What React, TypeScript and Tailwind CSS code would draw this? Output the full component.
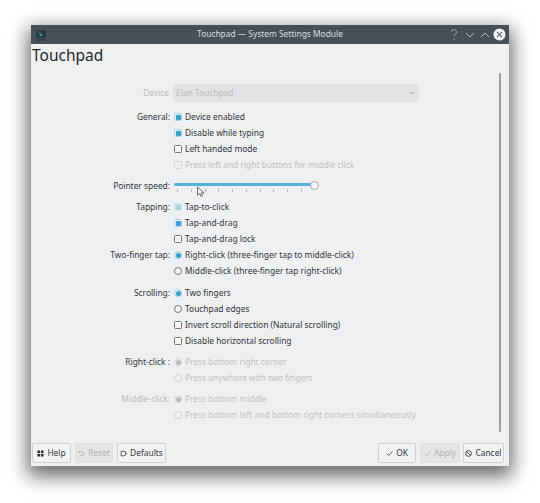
import React from 'react';

type Kind = 'check' | 'radio';

const Box = ({ kind, on, off, pale }: { kind: Kind; on?: boolean; off?: boolean; pale?: boolean }) => (
  <span
    className={`flex h-[8px] w-[8px] shrink-0 items-center justify-center border ${
      kind === 'radio' ? 'rounded-full' : 'rounded-[1.5px]'
    } ${pale ? 'border-[#d3e6ee] bg-[#d3e6ee]' : off ? 'border-[#d2d4d6] bg-[#f0f1f2]' : on ? 'border-[#9fd3e8] bg-[#e8f2f6]' : 'border-[#6f7579] bg-[#f4f5f6]'}`}
  >
    {on && (
      <span
        className={`h-[5px] w-[5px] ${kind === 'radio' ? 'rounded-full' : 'rounded-[1px]'} ${
          pale ? 'bg-[#a8d0df]' : off ? 'bg-[#b9bcbf]' : 'bg-[#3a9fc9]'
        }`}
      />
    )}
  </span>
);

const Row = ({
  label,
  labelOff,
  kind,
  on,
  off,
  pale,
  text,
}: {
  label?: string;
  labelOff?: boolean;
  kind: Kind;
  on?: boolean;
  off?: boolean;
  pale?: boolean;
  text: string;
}) => (
  <div className="flex h-4 items-center">
    <div className={`w-[143px] shrink-0 pr-[4px] text-right ${labelOff ? 'text-[#b9bcbe]' : 'text-[#31363b]'}`}>
      {label}
    </div>
    <Box kind={kind} on={on} off={off} pale={pale} />
    <span className={`ml-[3px] whitespace-nowrap ${off ? 'text-[#bfc1c3]' : 'text-[#31363b]'}`}>{text}</span>
  </div>
);

const Btn = ({
  icon,
  text,
  off,
  className = '',
}: {
  icon: React.ReactNode;
  text: string;
  off?: boolean;
  className?: string;
}) => (
  <div
    className={`flex h-[20px] items-center justify-center gap-[3px] rounded-[2px] border ${
      off ? 'border-[#dfe0e1] bg-[#e3e5e6] text-[#b0b3b5]' : 'border-[#cfd1d3] bg-[#f3f4f5] text-[#31363b]'
    } ${className}`}
  >
    {icon}
    <span>{text}</span>
  </div>
);

const ticks = [0, 1, 2, 3, 4, 5, 6, 7, 8, 9];

const App = () => {
  return (
    <div className="h-[503px] w-[540px] overflow-hidden bg-white pt-[25px] pl-[31px] font-['Noto_Sans',sans-serif] text-[8.4px]">
      <div className="flex h-[441px] w-[478px] flex-col bg-[#eff0f1] shadow-[0_7px_18px_3px_rgba(0,0,0,0.6)]">
        {/* title bar */}
        <div className="flex h-[19px] shrink-0 items-center bg-[#475057] pr-[3px] pl-[4px] text-[#d8dbdd]">
          <svg width="12" height="12" viewBox="0 0 12 12" fill="none">
            <rect x="1" y="1" width="10" height="8" fill="#2f3a40" />
            <path d="M4 2l4 5H5z" fill="#2a8fa8" />
            <path d="M1 11h10" stroke="#20282c" />
          </svg>
          <div className="flex-1 pl-[45px] text-center">Touchpad — System Settings Module</div>
          <svg width="12" height="12" viewBox="0 0 12 12" fill="none" stroke="#b8bcbf" strokeWidth="0.8">
            <path d="M3.5 3a2.5 2.5 0 1 1 3.5 2.4c-.7.4-1 .8-1 1.7M6 9.5v1.5" />
          </svg>
          <svg className="ml-[4px]" width="12" height="12" viewBox="0 0 12 12" fill="none" stroke="#c5c9cc" strokeWidth="0.9">
            <path d="M2 4l4 4 4-4" />
          </svg>
          <svg className="ml-[3px]" width="12" height="12" viewBox="0 0 12 12" fill="none" stroke="#c5c9cc" strokeWidth="0.9">
            <path d="M2 8l4-4 4 4" />
          </svg>
          <svg className="ml-[2px]" width="13" height="13" viewBox="0 0 13 13" fill="none">
            <circle cx="6.5" cy="6.5" r="6" fill="#f2f3f4" />
            <path d="M4 4l5 5M9 4l-5 5" stroke="#6a7176" strokeWidth="1.1" />
          </svg>
        </div>

        <div className="flex min-h-0 flex-1 flex-col">
          <div className="flex min-h-0 flex-1">
            <div className="min-w-0 flex-1">
              <div className="pl-[1px] text-[15.5px] leading-[23px] text-[#232629]">Touchpad</div>

              {/* device */}
              <div className="mt-[17px] flex h-[18px] items-center">
                <div className="w-[142px] shrink-0 pr-[4px] text-right text-[#b9bcbe]">Device</div>
                <div className="flex h-[18px] w-[246px] items-center justify-between rounded-[2px] bg-[#e1e3e4] pr-[4px] pl-[3px] text-[#b9bcbe]">
                  <span>Elan Touchpad</span>
                  <span className="mt-[1px] h-0 w-0 border-x-[3px] border-t-[3px] border-x-transparent border-t-[#c2c4c6]" />
                </div>
              </div>

              <div className="mt-[7px]">
                <Row label="General:" kind="check" on text="Device enabled" />
                <Row kind="check" on text="Disable while typing" />
                <Row kind="check" text="Left handed mode" />
                <Row kind="check" off text="Press left and right buttons for middle click" />
              </div>

              {/* pointer speed */}
              <div className="mt-[5px] flex h-[16px] items-center">
                <div className="w-[143px] shrink-0 pr-[4px] text-right text-[#31363b]">Pointer speed:</div>
                <div className="relative h-[16px] w-[146px]">
                  <div className="mt-[5px] h-[3px] w-[137px] rounded-full bg-[#4fb2d8]" />
                  <div className="mt-[3px] ml-[3px] flex w-[125px] justify-between">
                    {ticks.map((t) => (
                      <span key={t} className="h-[3px] w-px bg-[#b4b7ba]" />
                    ))}
                  </div>
                  <span className="absolute top-[3px] left-[136px] h-[9px] w-[9px] rounded-full border border-[#a5a8ab] bg-[#f4f5f6]" />
                  <svg className="absolute top-[8px] left-[22px]" width="9" height="12" viewBox="0 0 9 12">
                    <path d="M1.5 1v8l2-1.5 1.5 3 1.5-.7L5 7h3z" fill="#eff0f1" stroke="#4a5055" strokeWidth="0.8" />
                  </svg>
                </div>
              </div>

              <div className="mt-[5px]">
                <Row label="Tapping:" kind="check" on pale text="Tap-to-click" />
                <Row kind="check" on text="Tap-and-drag" />
                <Row kind="check" text="Tap-and-drag lock" />
                <Row label="Two-finger tap:" kind="radio" on text="Right-click (three-finger tap to middle-click)" />
                <Row kind="radio" text="Middle-click (three-finger tap right-click)" />
              </div>

              <div className="mt-[6px]">
                <Row label="Scrolling:" kind="radio" on text="Two fingers" />
                <Row kind="radio" text="Touchpad edges" />
                <Row kind="check" text="Invert scroll direction (Natural scrolling)" />
                <Row kind="check" text="Disable horizontal scrolling" />
              </div>

              <div className="mt-[5px]">
                <Row label="Right-click :" kind="radio" on off text="Press bottom right corner" />
                <Row kind="radio" off text="Press anywhere with two fingers" />
              </div>

              <div className="mt-[5px]">
                <Row label="Middle-click:" labelOff kind="radio" on off text="Press bottom middle" />
                <Row kind="radio" off text="Press bottom left and bottom right corners simultaneously" />
              </div>
            </div>

            {/* scrollbar */}
            <div className="w-[19px] shrink-0 pt-[29px]">
              <div className="ml-[9px] h-[359px] w-[2px] rounded-full bg-[#9a9ea1]" />
            </div>
          </div>

          {/* footer buttons */}
          <div className="flex h-[23px] shrink-0 items-start pr-[5px] pl-[1px]">
            <Btn
              className="w-[39px]"
              text="Help"
              icon={
                <svg width="7" height="7" viewBox="0 0 8 8" fill="#31363b">
                  <rect x="0.5" y="0.5" width="3" height="3" />
                  <rect x="4.5" y="0.5" width="3" height="3" />
                  <rect x="0.5" y="4.5" width="3" height="3" />
                  <rect x="4.5" y="4.5" width="3" height="3" />
                </svg>
              }
            />
            <Btn
              className="ml-[4px] w-[38px]"
              off
              text="Reset"
              icon={
                <svg width="7" height="7" viewBox="0 0 9 9" fill="none" stroke="#a9acae">
                  <path d="M1 2.5h4.5a2 2 0 0 1 0 4.5H3M2.5 1L1 2.5 2.5 4" />
                </svg>
              }
            />
            <Btn
              className="ml-[4px] w-[49px]"
              text="Defaults"
              icon={
                <svg width="7" height="7" viewBox="0 0 9 9" fill="none" stroke="#31363b">
                  <path d="M1.5 1.5h3a3 3 0 0 1 0 6h-3zM7.5 4.5H9" />
                </svg>
              }
            />
            <div className="flex-1" />
            <Btn
              className="w-[38px]"
              text="OK"
              icon={
                <svg width="7" height="7" viewBox="0 0 9 9" fill="none" stroke="#31363b">
                  <path d="M1 5l2.5 2L8 2" />
                </svg>
              }
            />
            <Btn
              className="ml-[4px] w-[40px]"
              off
              text="Apply"
              icon={
                <svg width="7" height="7" viewBox="0 0 9 9" fill="none" stroke="#a9acae">
                  <path d="M1 5l2.5 2L8 2" />
                </svg>
              }
            />
            <Btn
              className="ml-[3px] w-[41px]"
              text="Cancel"
              icon={
                <svg width="7" height="7" viewBox="0 0 8 8" fill="none" stroke="#31363b">
                  <circle cx="4" cy="4" r="3.3" />
                  <path d="M1.7 1.7l4.6 4.6" />
                </svg>
              }
            />
          </div>
        </div>
      </div>
    </div>
  );
};

export default App;
